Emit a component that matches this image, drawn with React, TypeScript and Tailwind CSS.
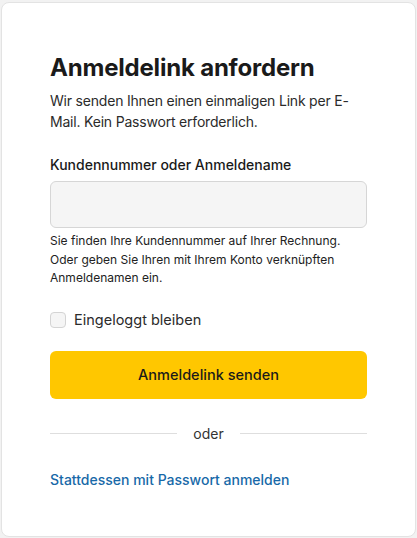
import { useState } from "react";

export default function App() {
  const [remember, setRemember] = useState(false);
  const [user, setUser] = useState("");

  return (
    <div
      className="min-h-[538px] bg-[#f2f2f2] pt-[2px] pl-px"
      style={{ fontFamily: "Inter, 'Noto Sans', sans-serif" }}
    >
      <div className="w-[415px] h-[535px] bg-white border border-[#e3e3e3] rounded-lg px-12 pt-[49px]">
        <h1 className="text-[24px] leading-8 font-bold text-[#1a1a1a] tracking-[-0.2px]">
          Anmeldelink anfordern
        </h1>
        <p className="mt-[6px] text-[14px] leading-[21px] tracking-[-0.2px] text-[#2b2b2b]">
          Wir senden Ihnen einen einmaligen Link per E-<wbr />Mail. Kein Passwort erforderlich.
        </p>

        {/* Form */}
        <form className="mt-[23px]" onSubmit={(e) => e.preventDefault()}>
          <label className="block text-[14px] leading-5 font-medium text-[#1a1a1a]">
            Kundennummer oder Anmeldename
          </label>
          <input
            value={user}
            onChange={(e) => setUser(e.target.value)}
            className="mt-[6px] block w-full h-[47px] rounded-md border border-[#d6d6d6] bg-[#f5f5f5] px-3 outline-none"
          />
          <p className="mt-[4px] text-[12px] leading-[18.5px] text-[#222]">
            Sie finden Ihre Kundennummer auf Ihrer Rechnung. Oder geben Sie Ihren mit Ihrem Konto verknüpften Anmeldenamen ein.
          </p>

          <label className="mt-[22px] flex items-center gap-2 cursor-pointer">
            <input
              type="checkbox"
              checked={remember}
              onChange={(e) => setRemember(e.target.checked)}
              className="appearance-none w-4 h-4 rounded border border-[#d4d4d4] bg-[#f5f5f5]"
            />
            <span className="text-[14.5px] leading-5 text-[#2b2b2b]">Eingeloggt bleiben</span>
          </label>

          <button className="mt-[21px] w-full h-12 rounded-md bg-[#ffc700] text-[14.5px] font-medium text-[#1a1a1a]">
            Anmeldelink senden
          </button>
        </form>

        <div className="mt-[25px] flex items-center gap-4">
          <div className="flex-1 h-px bg-[#dedede]" />
          <span className="text-[14px] leading-5 text-[#333]">oder</span>
          <div className="flex-1 h-px bg-[#dedede]" />
        </div>

        <a href="#" className="mt-[26px] block text-[14px] leading-5 font-medium text-[#1869a8]">
          Stattdessen mit Passwort anmelden
        </a>
      </div>
    </div>
  );
}
